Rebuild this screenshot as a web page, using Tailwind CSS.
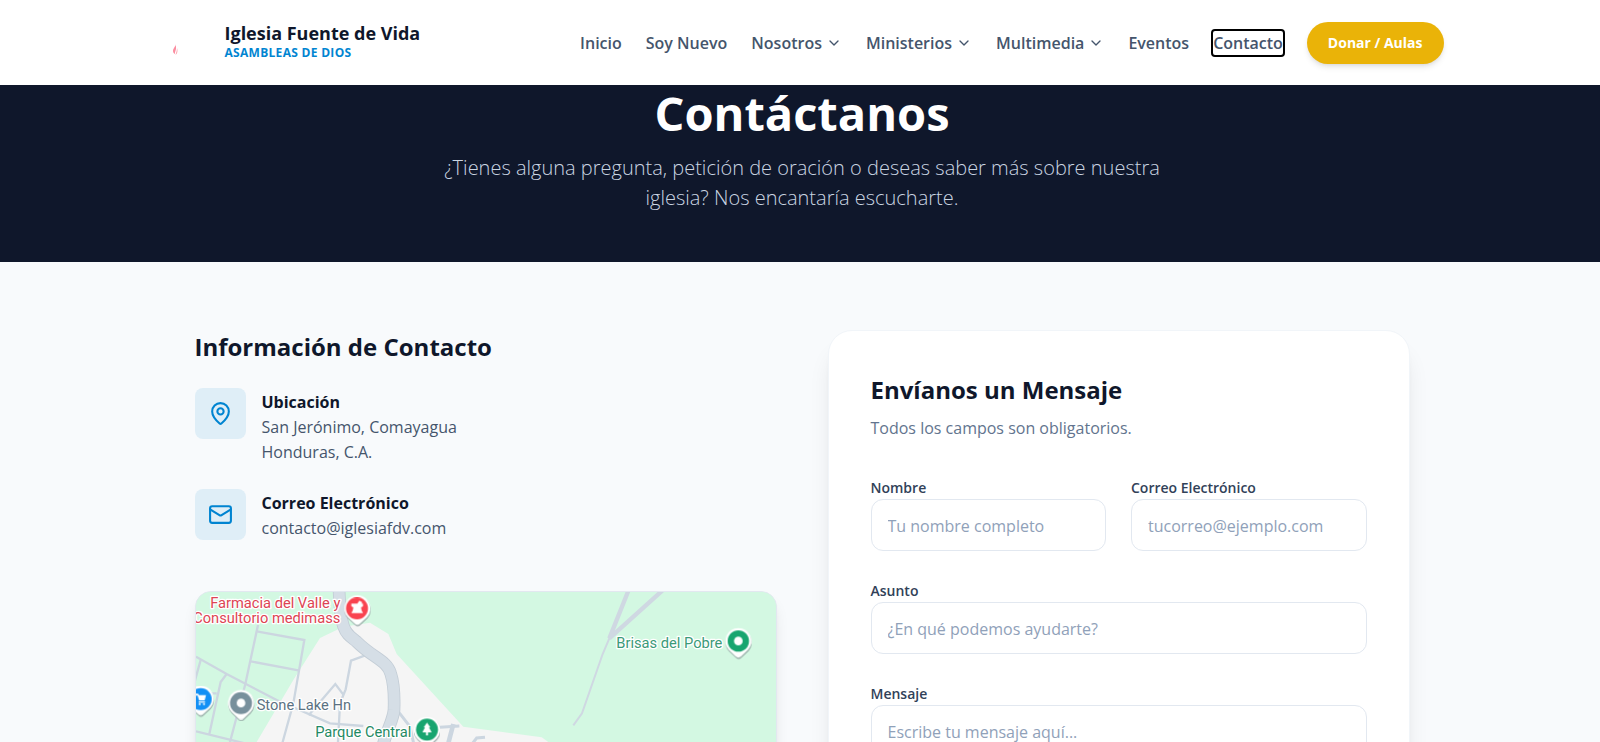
<!DOCTYPE html>
<html lang="es">
<head>
<meta charset="utf-8">
<meta name="viewport" content="width=device-width, initial-scale=1">
<title>Contacto | Iglesia Fuente de Vida</title>
<script src="https://cdn.jsdelivr.net/npm/@tailwindcss/browser@4"></script>
</head>
<body class="bg-slate-50 text-slate-900 font-['Open_Sans',sans-serif] text-base overflow-x-hidden">

<header class="sticky top-0 z-10 h-[85px] bg-white pl-1">
  <div class="mx-auto flex h-full max-w-[1351px] items-center justify-between px-[34px]">
    <a href="#" class="flex items-center gap-[13px]">
      <svg class="size-[51px]" viewBox="0 0 51 51" aria-hidden="true">
        <path d="M14.500 27C15 29.500 12 31 12 34 12 35.500 13 36.500 14 37 13.500 34.500 15.500 33 15 30Z" fill="#fb8da0"/>
        <path d="M16 31C17 33.500 16.500 36.500 14.500 38 15 35.500 16 34 16 31Z" fill="#fda4af"/>
      </svg>
      <span class="flex flex-col pb-1">
        <span class="text-lg leading-6 font-bold">Iglesia Fuente de Vida</span>
        <span class="text-xs leading-4 font-bold tracking-wide text-sky-600">ASAMBLEAS DE DIOS</span>
      </span>
    </a>
    <nav class="flex items-center gap-6 font-semibold text-slate-600">
      <a href="#">Inicio</a>
      <a href="#">Soy Nuevo</a>
      <button type="button" class="flex items-center gap-1">Nosotros
        <svg class="size-4" viewBox="0 0 24 24" fill="none" stroke="currentColor" stroke-width="2" stroke-linecap="round" stroke-linejoin="round"><path d="m6 9 6 6 6-6"/></svg>
      </button>
      <button type="button" class="flex items-center gap-1">Ministerios
        <svg class="size-4" viewBox="0 0 24 24" fill="none" stroke="currentColor" stroke-width="2" stroke-linecap="round" stroke-linejoin="round"><path d="m6 9 6 6 6-6"/></svg>
      </button>
      <button type="button" class="flex items-center gap-1">Multimedia
        <svg class="size-4" viewBox="0 0 24 24" fill="none" stroke="currentColor" stroke-width="2" stroke-linecap="round" stroke-linejoin="round"><path d="m6 9 6 6 6-6"/></svg>
      </button>
      <a href="#">Eventos</a>
      <a href="#" class="rounded-xs outline-2 outline-black">Contacto</a>
      <a href="#" class="flex h-[42px] items-center rounded-full bg-[#eab308] px-[21px] text-sm font-bold text-white shadow-md">Donar / Aulas</a>
    </nav>
  </div>
</header>

<section class="h-[177px] bg-slate-900 pl-1 text-center text-white">
  <h1 class="text-[47px] leading-[56px] font-bold">Contáctanos</h1>
  <p class="mx-auto max-w-[730px] pt-3 text-xl leading-[30px] font-light text-slate-300">¿Tienes alguna pregunta, petición de oración o deseas saber más sobre nuestra iglesia? Nos encantaría escucharte.</p>
</section>

<main class="pl-1">
  <div class="mx-auto grid max-w-[1215px] grid-cols-2 gap-[51px] pt-[68px]">
    <section>
      <h2 class="text-2xl leading-[34px] font-bold">Información de Contacto</h2>
      <ul class="flex flex-col gap-6 pt-6">
        <li class="flex gap-4">
          <span class="flex size-[51px] items-center justify-center rounded-lg bg-[#dfeef7] text-sky-600">
            <svg class="size-[25px]" viewBox="0 0 24 24" fill="none" stroke="currentColor" stroke-width="2" stroke-linecap="round" stroke-linejoin="round"><path d="M20 10c0 4.993-5.539 10.193-7.399 11.799a1 1 0 0 1-1.202 0C9.539 20.193 4 14.993 4 10a8 8 0 0 1 16 0"/><circle cx="12" cy="10" r="3"/></svg>
          </span>
          <div class="pt-0.5 leading-[25px]">
            <h3 class="font-bold">Ubicación</h3>
            <p class="text-slate-600">San Jerónimo, Comayagua<br>Honduras, C.A.</p>
          </div>
        </li>
        <li class="flex gap-4">
          <span class="flex size-[51px] items-center justify-center rounded-lg bg-[#dfeef7] text-sky-600">
            <svg class="size-[25px]" viewBox="0 0 24 24" fill="none" stroke="currentColor" stroke-width="2" stroke-linecap="round" stroke-linejoin="round"><rect x="2" y="4" width="20" height="16" rx="2"/><path d="m22 7-8.970 5.700a1.940 1.940 0 0 1-2.060 0L2 7"/></svg>
          </span>
          <div class="pt-0.5 leading-[25px]">
            <h3 class="font-bold">Correo Electrónico</h3>
            <p class="text-slate-600">contacto@iglesiafdv.com</p>
          </div>
        </li>
      </ul>
      <div class="mt-[50px] h-[270px] overflow-hidden rounded-2xl border border-slate-200 bg-[#d3f8e2] shadow-lg">
        <svg class="block size-full" viewBox="48 66 1740 804" preserveAspectRatio="xMinYMin slice" role="img" aria-label="Mapa de San Jerónimo, Comayagua">
          <rect x="0" y="0" width="1900" height="900" fill="#d3f8e2"/>
          <path d="M420 204 490 170 570 158 625 192 650 252 850 470 1085 502 1110 520 1300 900H60L230 516 340 330Z" fill="#f5f5f5"/>
          <g fill="none" stroke="#ccd6e0" stroke-width="7">
            <path d="M48 260 140 312 290 390 450 460 550 468"/>
            <path d="M234 165 196 342 150 516 120 640M230 184 373 210 340 400 308 516 270 700M212 274 355 301"/>
            <path d="M62 270 40 350M140 312 122 336 108 400 88 492M48 484 210 524M90 370H110"/>
            <path d="M562 254 513 272 497 358 480 400 474 516M386 436 466 342 490 374"/>
          </g>
          <g fill="none" stroke="#ccd6e0" stroke-width="9">
            <path d="M655 425 690 470 700 516V640M780 472 838 468M870 530 890 504 915 502"/>
            <path d="M820 462 806 516 780 660" stroke-width="14"/>
          </g>
          <path d="M477 50C480 190 500 190 530 215 580 265 620 270 632 310 645 350 643 390 642 420 640 450 620 480 605 540" fill="none" stroke="#c3cdd6" stroke-width="38"/>
          <path d="M477 50C480 190 500 190 530 215 580 265 620 270 632 310 645 350 643 390 642 420 640 450 620 480 605 540" fill="none" stroke="#d5dee6" stroke-width="33"/>
          <g fill="none" stroke="#cfd8e2">
            <path d="M1350 50 1288 205 1460 50" stroke-width="13"/>
            <path d="M1288 205 1268 252 1206 430 1180 466" stroke-width="6"/>
          </g>
          <g font-family="Roboto, sans-serif" font-size="44" stroke="#fff" stroke-width="8" stroke-linejoin="round" paint-order="stroke">
            <g fill="#dd4453" text-anchor="end"><text x="481" y="114">Farmacia del Valle y</text><text x="481" y="158">Consultorio medimass</text></g>
            <text x="230" y="420" fill="#5b7282">Stone Lake Hn</text>
            <text x="694" y="500" fill="#1f8a64" text-anchor="end">Parque Central</text>
            <text x="1627" y="234" fill="#3b9a78" text-anchor="end">Brisas del Pobre</text>
          </g>
          <defs>
            <path id="pin" d="M0-39a39 39 0 0 1 29 65L8 46q-8 7-16 0L-29 26A39 39 0 0 1 0-39Z"/>
          </defs>
          <g fill="#8a9a9a" opacity=".7"><use href="#pin" x="533" y="120"/><use href="#pin" x="184" y="404"/><use href="#pin" x="63" y="391"/><use href="#pin" x="742" y="484"/><use href="#pin" x="1676" y="218"/></g>
          <g fill="#fff"><use href="#pin" x="532" y="115"/><use href="#pin" x="183" y="399"/><use href="#pin" x="62" y="386"/><use href="#pin" x="741" y="479"/><use href="#pin" x="1675" y="213"/></g>
          <circle cx="531" cy="115" r="33" fill="#f9434f"/>
          <path d="M514 101H532L538 92 547 97 544 101H549V109L543 112Q543 119 549 129H514Q520 119 520 112L514 109Z" fill="#fff"/>
          <circle cx="183" cy="399" r="33" fill="#78909c"/><circle cx="183" cy="399" r="13" fill="#fff"/>
          <circle cx="62" cy="387" r="33" fill="#1390f5"/>
          <path d="M46 371H54L57 375H78L74 391H57L53 377H46ZM56 394H75V398H56Z" fill="#fff"/><circle cx="59" cy="402" r="3" fill="#fff"/><circle cx="72" cy="402" r="3" fill="#fff"/>
          <circle cx="741" cy="479" r="33" fill="#18a56f"/>
          <path d="M741 458 751 472H747L755 487H744V496H738V487H727L735 472H731Z" fill="#fff"/>
          <circle cx="1675" cy="213" r="32" fill="#18a56f"/><circle cx="1675" cy="213" r="13" fill="#fff"/>
        </svg>
      </div>
    </section>

    <section class="rounded-3xl border border-slate-100 bg-white p-[42px] shadow-xl">
      <h2 class="text-2xl leading-[34px] font-bold">Envíanos un Mensaje</h2>
      <p class="pt-2 leading-[26px] text-slate-500">Todos los campos son obligatorios.</p>
      <form class="grid grid-cols-2 gap-x-[25px] gap-y-[29px] pt-9">
        <div class="flex flex-col">
          <label for="nombre" class="text-sm leading-[22px] font-semibold text-slate-700">Nombre</label>
          <input id="nombre" type="text" placeholder="Tu nombre completo" class="h-[52px] w-full rounded-xl border border-slate-200 px-4 pt-0.5 placeholder:text-slate-400">
        </div>
        <div class="flex flex-col">
          <label for="correo" class="text-sm leading-[22px] font-semibold text-slate-700">Correo Electrónico</label>
          <input id="correo" type="email" placeholder="tucorreo@ejemplo.com" class="h-[52px] w-full rounded-xl border border-slate-200 px-4 pt-0.5 placeholder:text-slate-400">
        </div>
        <div class="col-span-2 flex flex-col">
          <label for="asunto" class="text-sm leading-[22px] font-semibold text-slate-700">Asunto</label>
          <input id="asunto" type="text" placeholder="¿En qué podemos ayudarte?" class="h-[52px] w-full rounded-xl border border-slate-200 px-4 pt-0.5 placeholder:text-slate-400">
        </div>
        <div class="col-span-2 flex flex-col">
          <label for="mensaje" class="text-sm leading-[22px] font-semibold text-slate-700">Mensaje</label>
          <textarea id="mensaje" rows="5" placeholder="Escribe tu mensaje aquí..." class="w-full resize-none rounded-xl border border-slate-200 px-4 py-[14px] placeholder:text-slate-400"></textarea>
        </div>
      </form>
    </section>
  </div>
</main>
</body>
</html>
